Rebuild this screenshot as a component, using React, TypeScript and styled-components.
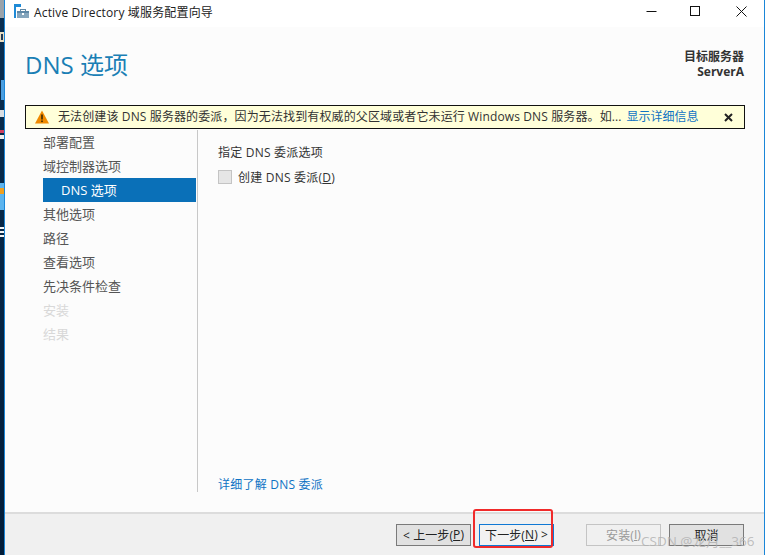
import React from "react";
import styled, { createGlobalStyle } from "styled-components";

const FONT = `"Open Sans", "Noto Sans CJK SC", sans-serif`;

const GlobalStyle = createGlobalStyle`
  html, body {
    margin: 0;
    padding: 0;
    width: 765px;
    height: 555px;
    overflow: hidden;
    background: #03223f;
  }
  * {
    box-sizing: border-box;
  }
`;

const Desktop = styled.div`
  width: 765px;
  height: 555px;
  padding-left: 4px;
  background: linear-gradient(#0a2f52, #021c38);
  position: relative;
  font-family: ${FONT};
`;

const DesktopIcons = styled.svg`
  position: absolute;
  left: 0;
  top: 0;
`;

const Window = styled.div`
  position: relative;
  width: 761px;
  height: 555px;
  display: flex;
  flex-direction: column;
  background: #fcfcfc;
  border-left: 1px solid #1a86d8;
  border-right: 1px solid #1a86d8;
`;

const TitleBar = styled.div`
  height: 27px;
  flex: none;
  background: #fff;
  display: flex;
  align-items: center;
  padding: 0 0 4px 9px;
`;

const TitleText = styled.div`
  margin-left: 4px;
  font-size: 12px;
  letter-spacing: 0.16px;
  color: #222;
`;

const WindowButtons = styled.div`
  margin-left: auto;
  display: flex;
  color: #111;
`;

const WindowButton = styled.div`
  width: 46px;
  height: 23px;
  display: flex;
  align-items: center;
  justify-content: center;
`;

const Header = styled.div`
  height: 78px;
  flex: none;
  display: flex;
  justify-content: space-between;
  padding: 21px 20px 0 20px;
`;

const PageTitle = styled.h1`
  margin: 0;
  font-size: 24px;
  font-weight: 400;
  line-height: 34px;
  color: #1a7fb5;
`;

const ServerInfo = styled.div`
  margin-top: 1px;
  text-align: right;
  font-size: 12px;
  font-weight: 700;
  line-height: 15px;
  color: #333;
`;

const Banner = styled.div`
  height: 24px;
  flex: none;
  margin: 0 19px 0 20px;
  display: flex;
  align-items: center;
  background: #ffffd9;
  border: 1px solid #111;
  padding: 0 11px 0 9px;
  font-size: 12px;
  color: #333;
`;

const BannerText = styled.span`
  margin: 0 0 2px 9px;
  white-space: nowrap;
  letter-spacing: 0.12px;
`;

const BannerLink = styled.span`
  margin: 0 0 2px 5px;
  white-space: nowrap;
  color: #0f73c4;
`;

const BannerClose = styled.span`
  margin-left: auto;
  display: flex;
`;

const Body = styled.div`
  flex: 1;
  min-height: 0;
  display: flex;
  padding: 1px 0 0 38px;
`;

const Sidebar = styled.nav`
  width: 155px;
  flex: none;
  border-right: 1px solid #c8c8c8;
  height: 362px;
  display: flex;
  flex-direction: column;
  padding-right: 1px;
`;

const NavItem = styled.div<{ $active?: boolean; $sub?: boolean; $disabled?: boolean }>`
  height: 24px;
  flex: none;
  line-height: 24px;
  font-size: 13px;
  padding-left: ${(p) => (p.$sub ? "18px" : "0")};
  background: ${(p) => (p.$active ? "#0a70b8" : "transparent")};
  color: ${(p) => (p.$active ? "#fff" : p.$disabled ? "#d8d8d8" : "#555")};
`;

const Content = styled.div`
  flex: 1;
  height: 364px;
  padding: 14px 0 0 20px;
  display: flex;
  flex-direction: column;
  font-size: 12px;
  letter-spacing: 0.22px;
  color: #333;
`;

const SectionLabel = styled.div`
  line-height: 18px;
`;

const CheckRow = styled.div`
  margin-top: 6px;
  display: flex;
  align-items: center;
`;

const CheckBox = styled.span`
  width: 14px;
  height: 14px;
  margin-right: 6px;
  background: #e6e6e6;
  border: 1px solid #c4c4c4;
`;

const MoreLink = styled.div`
  margin-top: auto;
  line-height: 18px;
  color: #0f73c4;
`;

const Footer = styled.div`
  height: 43px;
  flex: none;
  background: #f0f0f0;
  border-top: 2px solid #dcdcdc;
  display: flex;
  align-items: center;
  padding: 0 20px 0 391px;
`;

const Button = styled.div<{ $focused?: boolean; $disabled?: boolean; $gap?: number }>`
  width: 75px;
  height: 22px;
  margin-left: ${(p) => p.$gap ?? 0}px;
  display: flex;
  align-items: center;
  justify-content: center;
  font-size: 12px;
  letter-spacing: 0.1px;
  background: ${(p) => (p.$focused ? "#f2f2f2" : p.$disabled ? "#f0f0f0" : "#e1e1e1")};
  border: 1px solid ${(p) => (p.$focused ? "#0f78d4" : p.$disabled ? "#c4c4c4" : "#7a7a7a")};
  color: ${(p) => (p.$disabled ? "#999" : "#222")};
  white-space: pre;
`;

const Mnemonic = styled.span`
  text-decoration: underline;
`;

const Highlight = styled.div`
  position: absolute;
  left: 473px;
  top: 509px;
  width: 80px;
  height: 39px;
  border: 2.5px solid #f02a2a;
  border-radius: 3px;
`;

const Watermark = styled.div`
  position: absolute;
  left: 641px;
  top: 530px;
  font-size: 13.5px;
  color: rgba(175, 175, 175, 0.8);
  white-space: nowrap;
`;

const navItems = [
  { label: "部署配置" },
  { label: "域控制器选项" },
  { label: "DNS 选项", active: true, sub: true },
  { label: "其他选项" },
  { label: "路径" },
  { label: "查看选项" },
  { label: "先决条件检查" },
  { label: "安装", disabled: true },
  { label: "结果", disabled: true },
];

function DesktopScraps() {
  return (
    <DesktopIcons width="4" height="240" viewBox="0 0 4 240">
      <rect x="0" y="0" width="4" height="18" fill="#9aa3ab" />
      <rect x="0" y="32" width="4" height="10" fill="#e8dcc0" />
      <rect x="1" y="34" width="2" height="6" fill="#223a55" />
      <rect x="1" y="80" width="3" height="20" fill="#4a9ee0" />
      <rect x="0" y="110" width="4" height="7" fill="#d8dde2" />
      <rect x="0" y="130" width="4" height="3" fill="#d04060" />
      <rect x="0" y="135" width="4" height="4" fill="#f0f0f0" />
      <rect x="0" y="183" width="4" height="27" fill="#5cb4ee" />
      <rect x="0" y="188" width="4" height="6" fill="#f0a020" />
      <rect x="0" y="227" width="4" height="2" fill="#f4f4f4" />
      <rect x="0" y="231" width="4" height="2" fill="#f4f4f4" />
      <rect x="0" y="235" width="4" height="2" fill="#f4f4f4" />
    </DesktopIcons>
  );
}

function AppIcon() {
  return (
    <svg width="16" height="15" viewBox="0 0 16 15">
      <rect x="0" y="0" width="2" height="14" fill="#1e8ad6" />
      <rect x="0" y="0" width="7" height="3" fill="#1e8ad6" />
      <rect x="3" y="7" width="12" height="7" fill="#86a6bd" />
      <rect x="3" y="7" width="12" height="2" fill="#5f88a6" />
      <rect x="6.5" y="5.5" width="5" height="2" fill="none" stroke="#5f88a6" />
      <rect x="8" y="9" width="2" height="2" fill="#fff" />
    </svg>
  );
}

function WarningIcon() {
  return (
    <svg width="14" height="14" viewBox="0 0 14 14">
      <path d="M7 0.5 L14 13.5 H0 Z" fill="#f08a00" />
      <rect x="6.2" y="4.5" width="1.6" height="5" fill="#3a2a00" />
      <rect x="6.2" y="10.5" width="1.6" height="1.6" fill="#3a2a00" />
    </svg>
  );
}

function CloseMark() {
  return (
    <svg width="9" height="9" viewBox="0 0 9 9">
      <path d="M1 1 L8 8 M8 1 L1 8" stroke="#222" strokeWidth="2" />
    </svg>
  );
}

export default function App() {
  return (
    <Desktop>
      <GlobalStyle />
      <DesktopScraps />
      <Window>
        <TitleBar>
          <AppIcon />
          <TitleText>Active Directory 域服务配置向导</TitleText>
          <WindowButtons>
            <WindowButton>
              <svg width="15" height="11" viewBox="0 0 15 11">
                <path d="M4.5 5.5 H14.5" stroke="#111" />
              </svg>
            </WindowButton>
            <WindowButton>
              <svg width="11" height="11" viewBox="0 0 11 11">
                <rect x="0.5" y="0.5" width="9" height="9" fill="none" stroke="#111" />
              </svg>
            </WindowButton>
            <WindowButton>
              <svg width="11" height="11" viewBox="0 0 11 11">
                <path d="M0.5 0.5 L10.5 10.5 M10.5 0.5 L0.5 10.5" stroke="#111" />
              </svg>
            </WindowButton>
          </WindowButtons>
        </TitleBar>
        <Header>
          <PageTitle>DNS 选项</PageTitle>
          <ServerInfo>
            目标服务器
            <br />
            ServerA
          </ServerInfo>
        </Header>
        <Banner>
          <WarningIcon />
          <BannerText>
            无法创建该 DNS 服务器的委派，因为无法找到有权威的父区域或者它未运行 Windows DNS 服务器。如...
          </BannerText>
          <BannerLink>显示详细信息</BannerLink>
          <BannerClose>
            <CloseMark />
          </BannerClose>
        </Banner>
        <Body>
          <Sidebar>
            {navItems.map((item) => (
              <NavItem key={item.label} $active={item.active} $sub={item.sub} $disabled={item.disabled}>
                {item.label}
              </NavItem>
            ))}
          </Sidebar>
          <Content>
            <SectionLabel>指定 DNS 委派选项</SectionLabel>
            <CheckRow>
              <CheckBox />
              <span>
                创建 DNS 委派(<Mnemonic>D</Mnemonic>)
              </span>
            </CheckRow>
            <MoreLink>详细了解 DNS 委派</MoreLink>
          </Content>
        </Body>
        <Footer>
          <Button>
            {"< 上一步("}
            <Mnemonic>P</Mnemonic>)
          </Button>
          <Button $focused $gap={8}>
            下一步(<Mnemonic>N</Mnemonic>
            {") >"}
          </Button>
          <Button $disabled $gap={32}>
            安装(<Mnemonic>I</Mnemonic>)
          </Button>
          <Button $gap={8}>取消</Button>
        </Footer>
      </Window>
      <Highlight />
      <Watermark>CSDN @龙月__366</Watermark>
    </Desktop>
  );
}
